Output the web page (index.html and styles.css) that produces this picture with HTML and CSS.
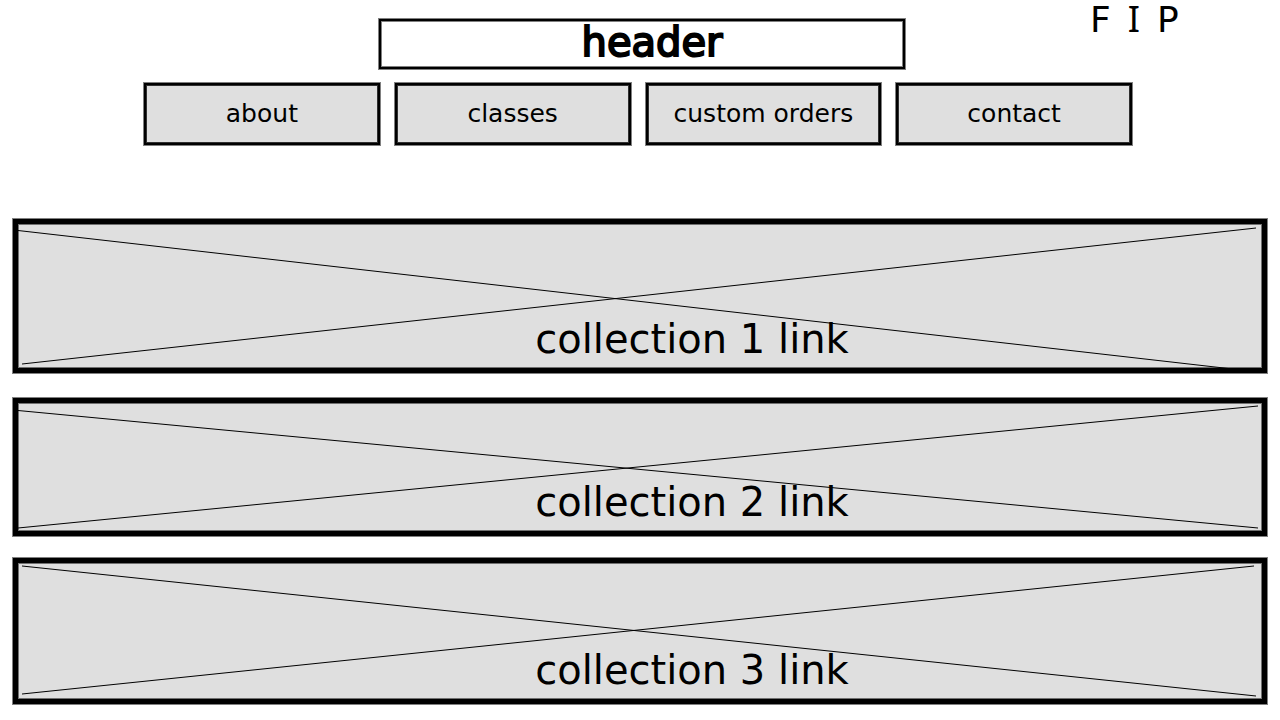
FILE: index.html
```html
<!DOCTYPE html>
<html lang="en">
<head>
<meta charset="utf-8">
<title>Home</title>
<link rel="stylesheet" href="styles.css">
</head>
<body>
<header class="top">
  <h1 class="title">header</h1>
  <div class="social">
    <a href="#f">F</a>
    <a class="serifed" href="#i">I</a>
    <a href="#p">P</a>
  </div>
</header>
<nav class="menu">
  <a class="menu-item" href="#about">about</a>
  <a class="menu-item" href="#classes">classes</a>
  <a class="menu-item" href="#orders">custom orders</a>
  <a class="menu-item" href="#contact">contact</a>
</nav>
<main class="collections">
  <a class="card card-tall" href="#c1">
    <svg class="cross" viewBox="18 224 1244 144" preserveAspectRatio="none" aria-hidden="true"><path d="M18 230.5L1237 369.5M22 364L1256 228"/></svg>
    <span class="label">collection 1 link</span>
  </a>
  <a class="card card-short" href="#c2">
    <svg class="cross" viewBox="18 403 1244 128" preserveAspectRatio="none" aria-hidden="true"><path d="M18 410.5L1258 528M18 528L1258 406"/></svg>
    <span class="label">collection 2 link</span>
  </a>
  <a class="card" href="#c3">
    <svg class="cross" viewBox="18 563 1244 136" preserveAspectRatio="none" aria-hidden="true"><path d="M22 566L1256 696M22 694L1254 566"/></svg>
    <span class="label">collection 3 link</span>
  </a>
</main>
</body>
</html>
```
FILE: styles.css
```css
* {
  box-sizing: border-box;
}

body {
  margin: 0;
  padding: 0 13px 15px;
  background: #fff;
  color: #000;
  font-family: "DejaVu Sans", Verdana, sans-serif;
}

a {
  color: inherit;
  text-decoration: none;
}

.top {
  display: grid;
  grid-template-columns: 366fr 526fr 362fr;
}

.title {
  grid-column: 2;
  min-height: 50px;
  margin: 19px 0 0;
  padding-left: 20px;
  border: 2px solid #000;
  box-shadow: 0 0 0 1px #808080, inset 0 0 0 1px #808080;
  font-size: 40px;
  font-weight: 400;
  line-height: 42px;
  text-align: center;
  -webkit-text-stroke: 2px #000;
}

.social {
  display: flex;
  align-items: baseline;
  gap: 17px;
  padding-left: 185px;
  font-size: 36px;
  line-height: 38px;
}

.serifed {
  font-family: "Noto Sans", Verdana, sans-serif;
}

.menu {
  display: grid;
  grid-template-columns: repeat(4, 1fr);
  gap: 15px;
  margin: 14px 135px 0 131px;
}

.menu-item {
  display: flex;
  align-items: center;
  justify-content: center;
  min-height: 62px;
  padding-bottom: 2px;
  border: 2px solid #000;
  box-shadow: 0 0 0 1px #808080, inset 0 0 0 1px #303030;
  background: #dfdfdf;
  font-size: 25px;
  white-space: nowrap;
}

.collections {
  display: flex;
  flex-direction: column;
  gap: 22px;
  margin-top: 74px;
}

.card {
  position: relative;
  display: flex;
  align-items: flex-end;
  justify-content: center;
  min-height: 146px;
  padding: 0 0 9px 104px;
  border: 5px solid #000;
  box-shadow: 0 0 0 1px #808080, inset 0 0 0 1px #707070;
  background: #dfdfdf;
}

.card-tall {
  min-height: 154px;
  margin-bottom: 3px;
}

.card-short {
  min-height: 138px;
}

.cross {
  position: absolute;
  inset: 0;
  width: 100%;
  height: 100%;
  fill: none;
  stroke: #000;
  stroke-width: 1px;
}

.label {
  font-size: 40px;
  line-height: 40px;
}
```
